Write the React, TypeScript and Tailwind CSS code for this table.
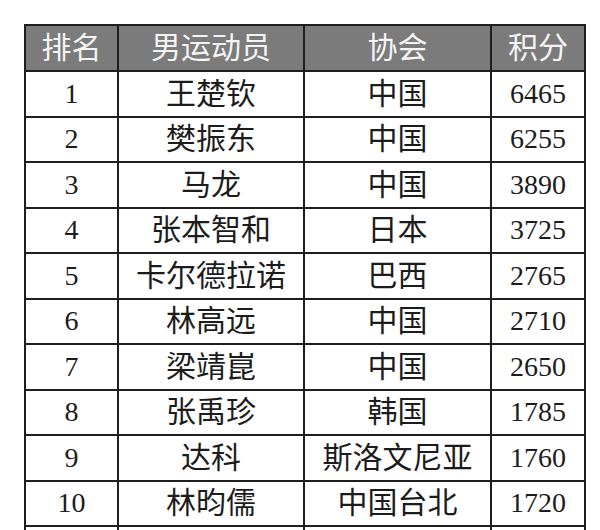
const rows: [string, string, string, string][] = [
  ["1", "王楚钦", "中国", "6465"],
  ["2", "樊振东", "中国", "6255"],
  ["3", "马龙", "中国", "3890"],
  ["4", "张本智和", "日本", "3725"],
  ["5", "卡尔德拉诺", "巴西", "2765"],
  ["6", "林高远", "中国", "2710"],
  ["7", "梁靖崑", "中国", "2650"],
  ["8", "张禹珍", "韩国", "1785"],
  ["9", "达科", "斯洛文尼亚", "1760"],
  ["10", "林昀儒", "中国台北", "1720"],
  ["", "", "", ""],
];

export default function App() {
  return (
    <div className="w-[600px] h-[530px] overflow-hidden bg-white pt-[24px] pl-[24px] font-['Liberation_Serif','Noto_Sans_CJK_SC',serif]">
      <table className="border-collapse table-fixed w-[560px]">
        <colgroup>
          <col className="w-[93px]" />
          <col className="w-[186px]" />
          <col className="w-[187px]" />
          <col className="w-[94px]" />
        </colgroup>
        <thead>
          <tr className="h-[46px] bg-[#7b7b7b] text-[#f4f4f4] text-[30px] leading-none">
            <th className="border-2 border-[#1e1e1e] font-normal">排名</th>
            <th className="border-2 border-[#1e1e1e] font-normal">男运动员</th>
            <th className="border-2 border-[#1e1e1e] font-normal">协会</th>
            <th className="border-2 border-[#1e1e1e] font-normal">积分</th>
          </tr>
        </thead>
        <tbody>
          {rows.map((r, i) => (
            <tr key={i} className="h-[45.5px] text-[#1c1c1c] leading-none">
              <td className="border-2 border-[#1e1e1e] text-center text-[28px]">{r[0]}</td>
              <td className="border-2 border-[#1e1e1e] text-center text-[30px]">{r[1]}</td>
              <td className="border-2 border-[#1e1e1e] text-center text-[30px]">{r[2]}</td>
              <td className="border-2 border-[#1e1e1e] text-center text-[28px]">{r[3]}</td>
            </tr>
          ))}
        </tbody>
      </table>
    </div>
  );
}
